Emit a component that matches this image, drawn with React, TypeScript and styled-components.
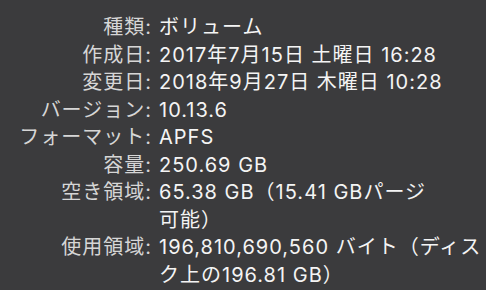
import React from 'react';
import styled, { createGlobalStyle } from 'styled-components';

const GlobalStyle = createGlobalStyle`
   html, body {
      margin: 0;
      padding: 0;
      background: #3b3b3d;
   }
`;

const Panel = styled.div`
   width: 486px;
   height: 290px;
   box-sizing: border-box;
   padding-top: 14px;
   background: #3b3b3d;
   font-family: Inter, 'Noto Sans CJK JP', sans-serif;
   font-size: 20px;
   letter-spacing: 1px;
   line-height: 27.5px;
   overflow: hidden;
`;

const InfoGrid = styled.dl`
   display: grid;
   grid-template-columns: 152px 1fr;
   column-gap: 7px;
   margin: 0;
`;

const Label = styled.dt`
   text-align: right;
   color: #d6d6d6;
   white-space: nowrap;
`;

const Value = styled.dd`
   margin: 0;
   color: #f4f4f4;
   white-space: nowrap;
`;

interface InfoRow {
   label: string;
   lines: string[];
}

const rows: InfoRow[] = [
   { label: '種類:', lines: ['ボリューム'] },
   { label: '作成日:', lines: ['2017年7月15日 土曜日 16:28'] },
   { label: '変更日:', lines: ['2018年9月27日 木曜日 10:28'] },
   { label: 'バージョン:', lines: ['10.13.6'] },
   { label: 'フォーマット:', lines: ['APFS'] },
   { label: '容量:', lines: ['250.69 GB'] },
   { label: '空き領域:', lines: ['65.38 GB（15.41 GBパージ', '可能）'] },
   {
      label: '使用領域:',
      lines: ['196,810,690,560 バイト（ディス', 'ク上の196.81 GB）'],
   },
];

const App: React.FC = () => {
   return (
      <>
         <GlobalStyle />
         <Panel>
            <InfoGrid>
               {rows.map((row) => (
                  <React.Fragment key={row.label}>
                     <Label>{row.label}</Label>
                     <Value>
                        {row.lines.map((line, index) => (
                           <div key={index}>{line}</div>
                        ))}
                     </Value>
                  </React.Fragment>
               ))}
            </InfoGrid>
         </Panel>
      </>
   );
};

export default App;
